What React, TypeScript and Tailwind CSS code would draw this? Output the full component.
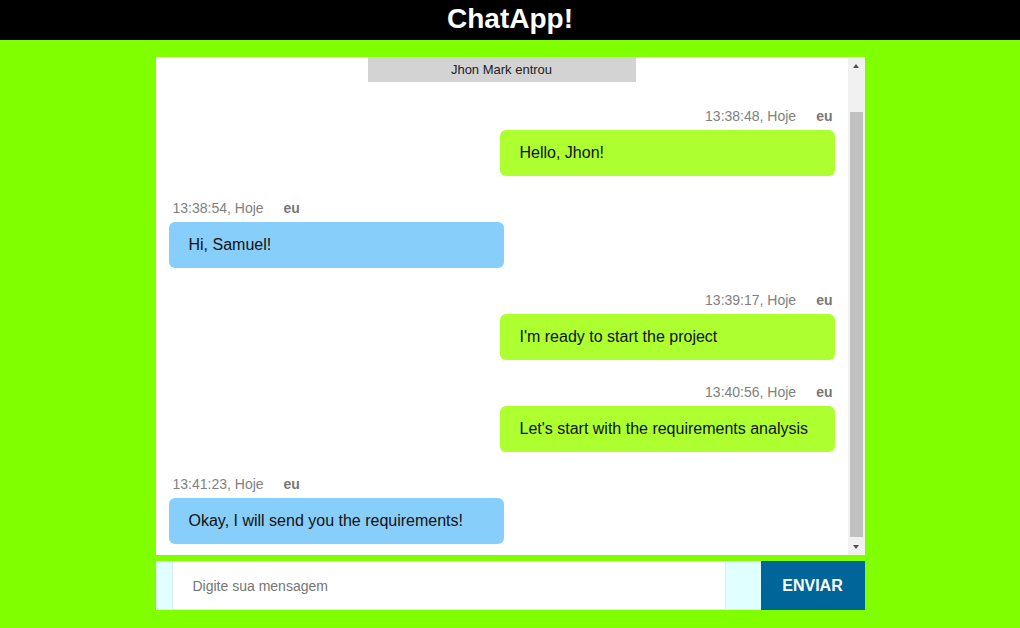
const messages = [
  { mine: true, time: "13:38:48, Hoje", text: "Hello, Jhon!" },
  { mine: false, time: "13:38:54, Hoje", text: "Hi, Samuel!" },
  { mine: true, time: "13:39:17, Hoje", text: "I'm ready to start the project" },
  { mine: true, time: "13:40:56, Hoje", text: "Let's start with the requirements analysis" },
  { mine: false, time: "13:41:23, Hoje", text: "Okay, I will send you the requirements!" },
];

const App = () => {
  return (
    <div className="min-h-screen bg-[#7fff00] font-['Liberation_Sans',Arial,sans-serif]">
      {/* Header */}
      <header className="h-10 bg-black text-center">
        <h1 className="text-[28px] font-bold leading-[37px] text-white">ChatApp!</h1>
      </header>

      <div className="mx-auto mt-[17px] w-[709px]">
        {/* Chat window */}
        <div className="flex h-[498px] bg-white">
          <div className="flex flex-1 flex-col overflow-hidden">
            <div className="mx-auto h-[25px] w-[268px] bg-[#d3d3d3] text-center text-[13px] leading-[25px] text-[#222]">
              Jhon Mark entrou
            </div>

            <div className="mt-[26px] flex flex-col gap-6 pl-[13px] pr-[13px]">
              {messages.map((m, i) => (
                <div key={i} className={m.mine ? "flex flex-col items-end" : "flex flex-col items-start"}>
                  <div className={m.mine ? "flex pr-0.5 text-sm leading-4" : "flex pl-1 text-sm leading-4"}>
                    <span className="text-[#808080]">{m.time}</span>
                    <span className="ml-5 font-bold text-[#777]">eu</span>
                  </div>
                  <div
                    className={
                      m.mine
                        ? "mt-1.5 w-[335px] rounded-md bg-[#adff2f] px-5 py-3 text-base leading-[22px] text-[#111]"
                        : "mt-1.5 w-[335px] rounded-md bg-[#87cefa] px-5 py-3 text-base leading-[22px] text-[#111]"
                    }
                  >
                    {m.text}
                  </div>
                </div>
              ))}
            </div>
          </div>

          {/* Scrollbar */}
          <div className="flex w-[17px] flex-col items-center bg-[#f1f1f1]">
            <div className="flex h-[17px] w-full items-center justify-center">
              <div className="h-0 w-0 border-x-[3.5px] border-b-[4px] border-x-transparent border-b-[#505050]" />
            </div>
            <div className="mt-[38px] h-[425px] w-[13px] bg-[#c1c1c1]" />
            <div className="mt-auto flex h-[17px] w-full items-center justify-center">
              <div className="h-0 w-0 border-x-[3.5px] border-t-[4px] border-x-transparent border-t-[#505050]" />
            </div>
          </div>
        </div>

        {/* Input bar */}
        <div className="mt-1.5 flex h-[49px]">
          <div className="flex flex-1 bg-[#e0ffff] pl-4 pr-[35px]">
            <input
              className="h-full w-full border border-[#d6eef2] bg-white pl-5 text-sm text-[#333] outline-none placeholder:text-[#757575]"
              placeholder="Digite sua mensagem"
            />
          </div>
          <button className="w-[104px] bg-[#006699] text-base font-bold text-white">ENVIAR</button>
        </div>
      </div>
    </div>
  );
};

export default App;
